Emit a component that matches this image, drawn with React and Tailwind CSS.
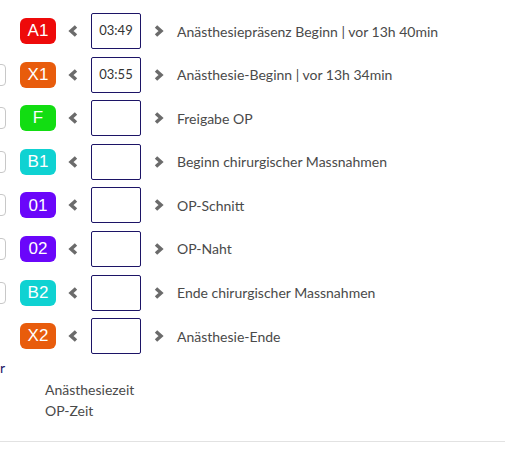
import React from "react";

const rows = [
  { code: "A1", color: "bg-[#ee0a0a]", time: "03:49", label: "Anästhesiepräsenz Beginn | vor 13h 40min", side: false },
  { code: "X1", color: "bg-[#e85c0c]", time: "03:55", label: "Anästhesie-Beginn | vor 13h 34min", side: true },
  { code: "F", color: "bg-[#12dd12]", time: "", label: "Freigabe OP", side: true },
  { code: "B1", color: "bg-[#0fd2d2]", time: "", label: "Beginn chirurgischer Massnahmen", side: true },
  { code: "01", color: "bg-[#6a06fa]", time: "", label: "OP-Schnitt", side: true },
  { code: "02", color: "bg-[#6a06fa]", time: "", label: "OP-Naht", side: true },
  { code: "B2", color: "bg-[#0fd2d2]", time: "", label: "Ende chirurgischer Massnahmen", side: true },
  { code: "X2", color: "bg-[#e85c0c]", time: "", label: "Anästhesie-Ende", side: false },
];

function Chevron({ dir }) {
  const pts = dir === "left" ? "8,1.5 3,6 8,10.5" : "2,1.5 7,6 2,10.5";
  return (
    <svg width="10" height="12" viewBox="0 0 10 12" className="shrink-0">
      <polyline points={pts} fill="none" stroke="#6b6b6b" strokeWidth="3.5" strokeLinejoin="miter" />
    </svg>
  );
}

export default function App() {
  return (
    <div className="w-[505px] h-[455px] bg-white overflow-hidden font-['Lato',sans-serif]">
      <div className="flex flex-col gap-[7.6px] pt-[13px]">
        {rows.map((r) => (
          <div key={r.code} className="flex items-center h-9">
            <div className="w-[20px] flex justify-start">
              {r.side && (
                <div className="w-[20px] h-[22px] -ml-[14px] border border-[#c8c8c8] rounded-[4px] shrink-0" />
              )}
            </div>
            <div
              className={`w-9 h-[26px] rounded-[6px] ${r.color} text-white text-[17px] flex items-center justify-center font-['Liberation_Sans',sans-serif]`}
            >
              {r.code}
            </div>
            <div className="ml-[12px]">
              <Chevron dir="left" />
            </div>
            <div className="ml-[13px] w-[50px] h-9 border border-[#1c1466] rounded-[2px] flex items-center justify-center text-[13px] text-[#333]">
              {r.time}
            </div>
            <div className="ml-[13px]">
              <Chevron dir="right" />
            </div>
            <div className="ml-[13px] text-[14px] text-[#4a4a4a]">{r.label}</div>
          </div>
        ))}
      </div>
      <div className="mt-[4px] text-[14px] text-[#1c1466] leading-5">r</div>
      <div className="pl-[45px] mt-[1px] text-[14px] text-[#4a4a4a] leading-[21px]">
        <div>Anästhesiezeit</div>
        <div>OP-Zeit</div>
      </div>
      <div className="mt-[20px] border-t border-[#e2e2e2]" />
    </div>
  );
}
